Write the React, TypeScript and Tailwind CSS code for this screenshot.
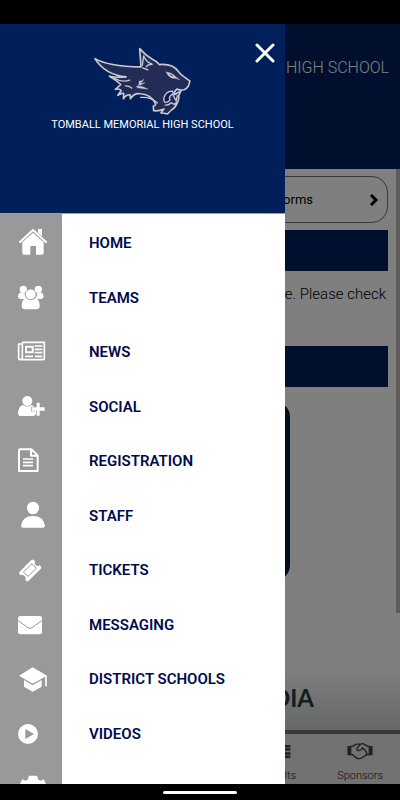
import type { ReactNode } from "react";

type IconProps = { top: number; children: ReactNode };

function Icon({ top, children }: IconProps) {
  return (
    <svg viewBox={`48 ${top} 96 96`} className="size-8 shrink-0" fill="#fff" aria-hidden="true">
      {children}
    </svg>
  );
}

const items: { label: string; top: number; art: ReactNode }[] = [
  {
    label: "HOME",
    top: 37,
    art: (
      <>
        <path d="M60 82 L99 46 L138 82" fill="none" stroke="#fff" strokeWidth="6" strokeLinecap="round" strokeLinejoin="round" />
        <path d="M114 43h12v22l-12-11z" />
        <path d="M67 83 99 54l32 29v32q0 5-5 5h-18V94H91v26H72q-5 0-5-5z" />
      </>
    ),
  },
  {
    label: "TEAMS",
    top: 200,
    art: (
      <>
        <circle cx="70" cy="222" r="11" />
        <circle cx="115" cy="222" r="11" />
        <path d="M63 231q5 4 11 2-1 10 6 18h-18q-8-1-8-9 0-7 9-11zM122 231q-5 4-11 2 1 10-6 18h18q8-1 8-9 0-7-9-11z" />
        <path d="M77 248q15 13 31 0 11 6 11 24 0 10-10 10H75q-10 0-10-10 0-18 12-24z" />
        <circle cx="92" cy="237" r="16" stroke="#999" strokeWidth="2" />
      </>
    ),
  },
  {
    label: "NEWS",
    top: 363,
    art: (
      <>
        <path d="M67 382h66v48q0 4-4 4H61q-5 0-5-5v-42h8M67 382v46q0 5-5 5" fill="none" stroke="#fff" strokeWidth="5" strokeLinejoin="round" />
        <path d="M78 395h20v17H78z" fill="none" stroke="#fff" strokeWidth="6" />
        <path d="M104 393h23M104 403h23M104 413h23M75 424h24M104 424h23" fill="none" stroke="#fff" strokeWidth="5" />
      </>
    ),
  },
  {
    label: "SOCIAL",
    top: 78,
    art: (
      <>
        <circle cx="82" cy="108" r="15" />
        <path d="M69 120q13 9 26 0 10 4 13 17v9q-2 7-9 7H62q-8 0-8-9 1-19 15-24z" />
        <path d="M110 113h9v14h15v10h-15v15h-9v-15H95v-10h15z" stroke="#999" strokeWidth="4" paintOrder="stroke" />
      </>
    ),
  },
  {
    label: "REGISTRATION",
    top: 241,
    art: (
      <>
        <path d="M59 254h36l18 18v47H57v-63zM93 254v19h20" fill="none" stroke="#fff" strokeWidth="6" strokeLinejoin="round" />
        <path d="M69 283h30M69 293h30M69 303h30" fill="none" stroke="#fff" strokeWidth="5" />
      </>
    ),
  },
  {
    label: "STAFF",
    top: 0,
    art: (
      <>
        <ellipse cx="99" cy="24" rx="18" ry="19" />
        <path d="M63 77q4-29 36-29t36 29q0 6-6 6H69q-6 0-6-6z" />
      </>
    ),
  },
  {
    label: "TICKETS",
    top: 163,
    art: (
      <>
        <path d="M94 178q4-3 7 0l4 4q-3 8 3 12 5 4 11 0l4 4q2 3-1 7l-36 35q-4 4-7 1l-3-4q3-7-2-11-5-5-12-2l-4-4q-3-3 1-7z" />
        <path d="M70 214 96 189l13 14-25 24z" fill="none" stroke="#999" strokeWidth="3" strokeLinejoin="round" />
      </>
    ),
  },
  {
    label: "MESSAGING",
    top: 327,
    art: (
      <>
        <rect x="54" y="348" width="72" height="55" rx="7" />
        <path d="M53 361 84 383q6 4 12 0l31-22" fill="none" stroke="#999" strokeWidth="3" />
      </>
    ),
  },
  {
    label: "DISTRICT SCHOOLS",
    top: 41,
    art: (
      <>
        <path d="M57 76 98 51l43 25-43 24z" />
        <path d="M72 89 98 105l27-16v20L98 124 72 109z" />
        <path d="M138 76v32" stroke="#fff" strokeWidth="5" />
      </>
    ),
  },
  {
    label: "VIDEOS",
    top: 204,
    art: (
      <>
        <circle cx="84" cy="252" r="30" />
        <path d="M76 237v30l26-15z" fill="#999" />
      </>
    ),
  },
];

function Wildcat() {
  return (
    <svg viewBox="36 30 306 214" className="h-[71px] w-[102px]" aria-hidden="true">
      <g stroke="#c8cad0" strokeLinejoin="round" strokeLinecap="round">
        <path
          d="M44 68Q83 91 183 93l-4-55q17 20 37 31 14 6 22 17 39-4 57 20 8 11 18 17l17 12q-2 21-17 27-10 2-22-2-10 8-8 18 10-9 20-11l-6 11q2 16-12 37-10 6-22 20-10-3-20-3l9-12q-14 7-31 5l-1-14q9-2 6-8-13-28-46-29-17-3-29 15l-1-12q-12-1-20 12l1-16q-8-2-18 6l10-15q-6-7-17-3l16-15q-14-14-34-25 22 5 50 2Q75 117 44 68z"
          fill="#222c57"
          strokeWidth="5"
        />
        <path d="M187 88l4-28q7 18 26 25-14 0-18 8M104 127q20 14 45 6M136 150q12 0 20 7M188 96l16 6M182 185q31-3 50 17" fill="none" strokeWidth="4" />
        <path d="M177 136q10 0 15-6-5 11-14 12 10 1 17-2-10 8-20 9M168 151q19-2 36 9-18-1-32-4M258 108q18 1 29 14l13 10q-15-6-21-4-12-3-21-20z" fill="#c8cad0" strokeWidth="1" />
        <path d="M268 114q8 1 12 9-7-2-12-9z" fill="#222c57" stroke="none" />
        <path d="M278 166q-17 0-24 15-5 12 1 19 9 1 15-7-4-9 5-16 8-6 3-11zM280 178l9 18 3-16" fill="#001f5b" strokeWidth="4" />
        <path d="M256 208q11 1 18-7l9 5 8-6q-5 16-14 22" fill="none" strokeWidth="4" />
      </g>
    </svg>
  );
}

function Drawer() {
  return (
    <aside className="absolute inset-y-0 left-0 flex w-[285px] flex-col overflow-hidden bg-white">
      <header className="relative flex h-[190px] shrink-0 flex-col items-center border-b border-gray-400 bg-[#001f5b] pt-[22px]">
        <Wildcat />
        <p className="font-['Roboto',sans-serif] text-[11px] leading-4 text-white">TOMBALL MEMORIAL HIGH SCHOOL</p>
        <button type="button" aria-label="Close menu" className="absolute top-[17px] right-2 p-[2px]">
          <svg viewBox="0 0 20 20" className="size-5" fill="none" stroke="#fff" strokeWidth="3" strokeLinecap="round" aria-hidden="true">
            <path d="M2 2l16 16M18 2L2 18" />
          </svg>
        </button>
      </header>
      <nav className="min-h-0 flex-1 overflow-hidden bg-linear-to-r from-[#999] from-[62px] to-white to-[62px] pt-0.5">
        <ul className="flex h-[600px] flex-col font-['Roboto',sans-serif] text-[15px] font-semibold text-[#000b4d]">
          {items.map((item) => (
            <li key={item.label} className="flex flex-1">
              <a href="#" className="flex w-full items-center gap-[41px] pl-4">
                <Icon top={item.top}>{item.art}</Icon>
                {item.label}
              </a>
            </li>
          ))}
          <li className="flex flex-1">
            <a href="#" aria-label="Settings" className="flex w-full items-center pl-4">
              <Icon top={368}>
                <path d="M87 376h24l4 12 7 3 9-4 8 16-8 12v20H67v-20l-8-12 8-16 9 4 7-3z" />
              </Icon>
            </a>
          </li>
        </ul>
      </nav>
    </aside>
  );
}

function Page() {
  return (
    <div className="flex h-full flex-col bg-white font-['Roboto',sans-serif]">
      <header className="flex h-[145px] shrink-0 justify-end bg-[#001f5b] pt-8 pr-[11px]">
        <p className="text-base leading-6 font-light text-white">HIGH SCHOOL</p>
      </header>
      <div className="flex min-h-0 flex-1">
        <main className="flex min-w-0 flex-1 flex-col overflow-hidden pt-[7px] pl-2">
          <button type="button" className="mr-2 flex h-[47px] shrink-0 items-center justify-end gap-[57px] rounded-2xl border border-gray-500 pr-[9px] text-[13px]">
            orms
            <svg viewBox="0 0 8 12" className="h-3 w-2" fill="none" stroke="#000" strokeWidth="3" aria-hidden="true">
              <path d="M1 1l5 5-5 5" />
            </svg>
          </button>
          <div className="mt-[7px] mr-2 h-[41px] shrink-0 bg-[#001f5b]" />
          <p className="h-[75px] shrink-0 pt-[11px] pr-[10px] text-right text-[15px] leading-6 font-light">e. Please check</p>
          <div className="mr-2 h-[41px] shrink-0 bg-[#001f5b]" />
          <div className="mt-[14px] mr-[106px] h-[180px] shrink-0 rounded-2xl bg-[#001f3f]" />
        </main>
        <div className="h-[444px] w-1 bg-[#bcbab6]" />
      </div>
      <div className="flex h-[64px] shrink-0 items-center justify-end bg-linear-to-b from-white to-[#cdd0d0] pr-[86px]">
        <p className="font-['Lato',sans-serif] text-2xl font-bold text-[#253c3c]">DIA</p>
      </div>
      <footer className="flex h-[54px] shrink-0 justify-end gap-[41px] border-t-4 border-[#707070] bg-[#e4e4e4] pr-[17px] text-[11px] leading-4 font-light text-[#222]">
        <a href="#" className="flex flex-col items-end gap-[10px] pt-[11px]">
          <svg viewBox="0 0 16 16" className="size-4" fill="#444" aria-hidden="true">
            <path d="M0 0h11v3H0zM0 4h11v3H0zM0 9h11v3H0zM0 13h11v3H0z" />
          </svg>
          lts
        </a>
        <a href="#" className="flex flex-col items-center gap-2 pt-[9px]">
          <svg viewBox="226 217 90 60" className="h-5 w-[30px]" fill="none" stroke="#444" strokeWidth="5" strokeLinejoin="round" strokeLinecap="round" aria-hidden="true">
            <path d="M229 230h9v28h-9zM304 230h9v28h-9z" fill="#444" />
            <path d="M239 229h5l14-8h15l9-2 16 10h5M239 258h6l13 12q11 5 20-1l16-10h9M273 221l-12 14q-2 9 6 9 8-1 13-10l13 14q4 7-1 11" />
          </svg>
          Sponsors
        </a>
      </footer>
    </div>
  );
}

export default function App() {
  return (
    <div className="flex h-screen flex-col overflow-hidden bg-black">
      <div className="h-6 shrink-0" />
      <div className="relative min-h-0 flex-1 overflow-hidden">
        <Page />
        <div className="absolute inset-0 bg-black/50" />
        <Drawer />
      </div>
      <div className="flex h-4 shrink-0 items-center justify-center">
        <div className="h-[3px] w-[74px] rounded-full bg-white" />
      </div>
    </div>
  );
}
